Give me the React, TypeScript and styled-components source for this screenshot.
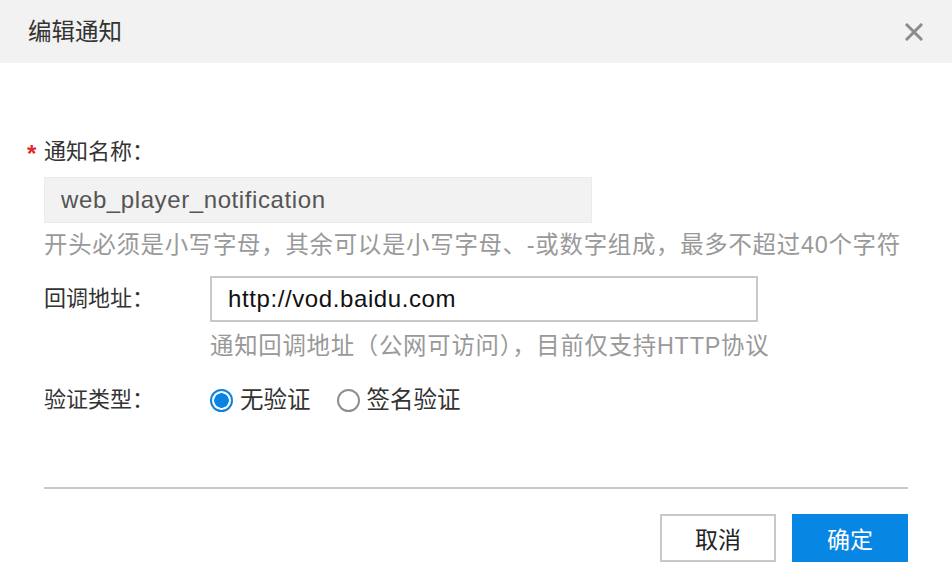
import styled, { createGlobalStyle } from "styled-components";

const GlobalStyle = createGlobalStyle`
  html, body {
    margin: 0;
    padding: 0;
    background: #ffffff;
  }
  body {
    font-family: "Liberation Sans", "Noto Sans CJK SC", sans-serif;
    color: #333333;
  }
  * {
    box-sizing: border-box;
  }
`;

const App: React.FC = () => {
  return (
    <>
      <GlobalStyle />
      <Dialog>
        <Header>
          <Title>编辑通知</Title>
          <Close aria-label="关闭">
            <svg width="18" height="18" viewBox="0 0 18 18">
              <path
                d="M2 2 L16 16 M16 2 L2 16"
                stroke="#8c8c8c"
                strokeWidth="3"
                strokeLinecap="square"
              />
            </svg>
          </Close>
        </Header>

        <Body>
          {/* 通知名称 */}
          <Label>
            <Star>*</Star>通知名称：
          </Label>
          <NameInput value="web_player_notification" disabled readOnly />
          <Help>
            开头必须是小写字母，其余可以是小写字母、-或数字组成，最多不超过40个字符
          </Help>

          {/* 回调地址 */}
          <Row $top={15}>
            <RowLabel>回调地址：</RowLabel>
            <UrlInput value="http://vod.baidu.com" readOnly />
          </Row>
          <Help $indent>通知回调地址（公网可访问），目前仅支持HTTP协议</Help>

          {/* 验证类型 */}
          <Row $top={22}>
            <RowLabel>验证类型：</RowLabel>
            <RadioGroup>
              <RadioItem>
                <Radio $checked />
                无验证
              </RadioItem>
              <RadioItem>
                <Radio />
                签名验证
              </RadioItem>
            </RadioGroup>
          </Row>

          <Divider />

          <Footer>
            <Button>取消</Button>
            <Button $primary>确定</Button>
          </Footer>
        </Body>
      </Dialog>
    </>
  );
};

export default App;

interface RowProps {
  $top: number;
}

const Dialog = styled.div`
  width: 952px;
  height: 584px;
  display: flex;
  flex-direction: column;
  background: #ffffff;
`;

const Header = styled.div`
  height: 63px;
  display: flex;
  justify-content: space-between;
  align-items: center;
  padding: 0 24px 0 28px;
  background: #f2f2f2;
`;

const Title = styled.div`
  font-size: 23.5px;
  line-height: 32px;
  color: #333333;
`;

const Close = styled.button`
  width: 28px;
  height: 28px;
  padding: 0;
  border: none;
  background: transparent;
  display: flex;
  align-items: center;
  justify-content: center;
  cursor: pointer;
`;

const Body = styled.div`
  display: flex;
  flex-direction: column;
  padding: 73px 44px 0 44px;
`;

const Label = styled.div`
  position: relative;
  font-size: 22px;
  line-height: 32px;
  color: #333333;
`;

const Star = styled.span`
  position: absolute;
  left: -17px;
  top: 2px;
  color: #e4262c;
  font-size: 24px;
  font-weight: bold;
`;

const InputBase = styled.input`
  width: 548px;
  height: 46px;
  font-family: "Liberation Sans", "Noto Sans CJK SC", sans-serif;
  font-size: 24px;
  letter-spacing: 0.6px;
  outline: none;
`;

const NameInput = styled(InputBase)`
  margin-top: 9px;
  padding: 0 16px;
  background: #f2f2f2;
  border: 1px solid #ebebeb;
  color: #555555;
  -webkit-text-fill-color: #555555;
  opacity: 1;
`;

const UrlInput = styled(InputBase)`
  padding: 0 16px;
  background: #ffffff;
  border: 2px solid #c8c8c8;
  color: #111111;
`;

const Help = styled.div<{ $indent?: boolean }>`
  margin-top: ${({ $indent }) => ($indent ? "8px" : "6px")};
  margin-left: ${({ $indent }) => ($indent ? "166px" : "0")};
  font-size: 23.4px;
  line-height: 32px;
  letter-spacing: 0.75px;
  color: #999999;
  white-space: nowrap;
`;

const Row = styled.div<RowProps>`
  display: flex;
  align-items: center;
  margin-top: ${({ $top }) => $top}px;
`;

const RowLabel = styled.div`
  width: 166px;
  flex-shrink: 0;
  font-size: 22px;
  line-height: 32px;
  color: #333333;
`;

const RadioGroup = styled.div`
  display: flex;
  align-items: center;
  gap: 26px;
`;

const RadioItem = styled.label`
  display: flex;
  align-items: center;
  gap: 7px;
  font-size: 23.5px;
  line-height: 32px;
  color: #333333;
  cursor: pointer;
`;

const Radio = styled.span<{ $checked?: boolean }>`
  width: 23px;
  height: 23px;
  border-radius: 50%;
  flex-shrink: 0;
  border: 2px solid ${({ $checked }) => ($checked ? "#0a84e2" : "#8f8f8f")};
  background: ${({ $checked }) =>
    $checked ? "radial-gradient(circle, #0a84e2 0 7px, #ffffff 7.5px)" : "#ffffff"};
`;

const Divider = styled.div`
  height: 2px;
  margin-top: 71px;
  background: #c8c8c8;
`;

const Footer = styled.div`
  display: flex;
  justify-content: flex-end;
  gap: 16px;
  margin-top: 25px;
`;

const Button = styled.button<{ $primary?: boolean }>`
  width: 116px;
  height: 48px;
  padding: 0;
  font-family: "Liberation Sans", "Noto Sans CJK SC", sans-serif;
  font-size: 23px;
  cursor: pointer;
  border: 2px solid ${({ $primary }) => ($primary ? "#0786e4" : "#c8c8c8")};
  background: ${({ $primary }) => ($primary ? "#0786e4" : "#ffffff")};
  color: ${({ $primary }) => ($primary ? "#ffffff" : "#222222")};
`;
